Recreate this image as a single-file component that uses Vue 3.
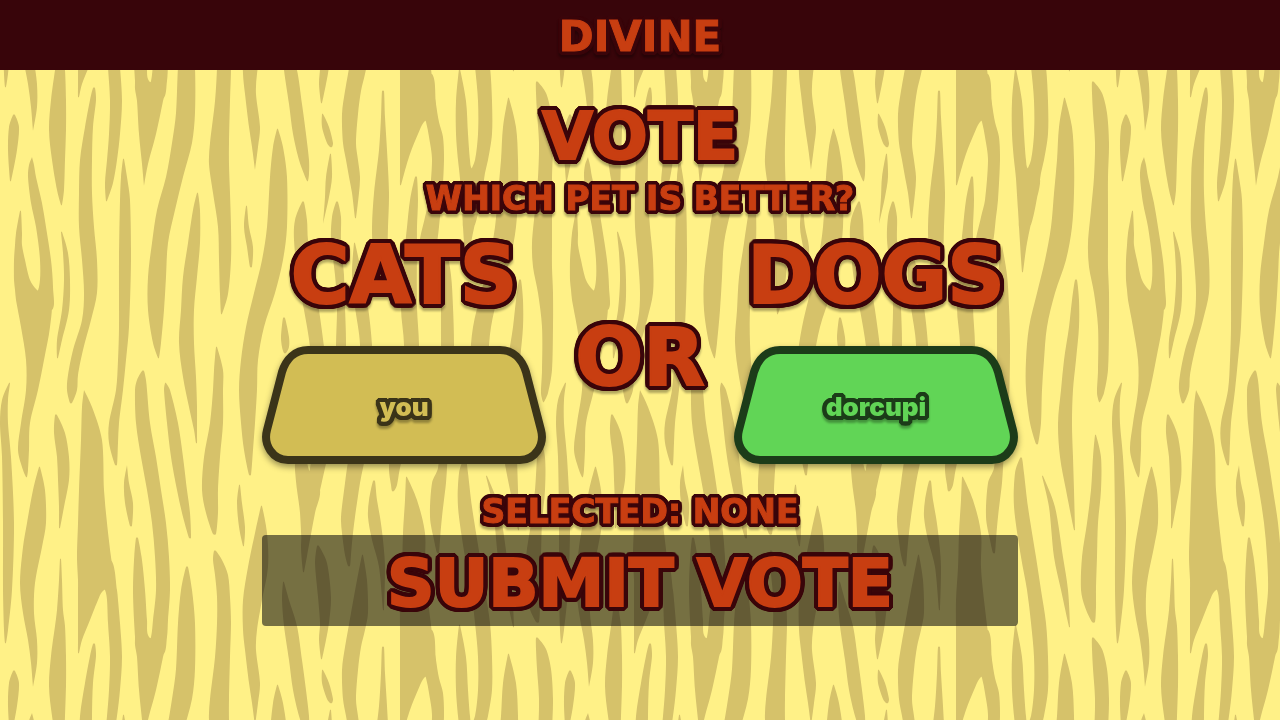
<script setup>
import { ref, computed } from 'vue'

const options = [
  { id: 'cats', label: 'CATS', player: 'you', tone: 'sand' },
  { id: 'dogs', label: 'DOGS', player: 'dorcupi', tone: 'leaf' },
]
const selected = ref(null)
const selectedLabel = computed(() => {
  const match = options.find((o) => o.id === selected.value)
  return match ? match.label : 'NONE'
})

// Wood grain: each streak is a list of rows [y, left, right] inside a repeating tile.
const TILE = 556
const streaks = [
  [[383,9,10],[400,2,8],[423,0,8],[457,2,11],[523,3,14],[590,3,12],[630,4,8],[643,5,6]],
  [[115,13,15],[127,9,19],[150,8,17],[181,10,11]],
  [[467,39,40],[490,33,45],[523,27,46],[547,23,42],[583,20,35],[613,23,34],[640,28,37],[663,31,37],[687,33,33]],
  [[157,32,32],[165,29,34],[177,28,36],[203,31,42],[227,36,46],[260,40,51],[287,39,53],[310,30,52]],
  [[211,20,21],[233,16,22],[245,15,22],[260,14,25],[280,14,30],[290,15,37],[300,16,51],[327,21,50],[360,26,44],[390,26,38],[423,21,30],[450,18,29],[470,23,28],[477,26,27]],
  [[559,60,61],[580,59,62],[610,57,63],[626,55,65],[656,51,66],[686,49,66],[716,52,65],[746,57,64],[761,61,62]],
  [[232,61,62],[253,63,68],[280,64,70],[310,62,69],[340,57,62],[358,57,58]],
  [[88,93,95],[100,90,96],[127,85,93],[160,80,92],[193,79,92],[227,79,94],[260,82,97],[293,84,97],[320,82,91],[350,73,83],[375,68,78],[390,67,77],[403,70,72]],
  [[390,84,84],[407,82,92],[440,81,102],[490,79,104],[523,78,107],[557,77,111],[580,78,114],[592,78,102],[600,78,98],[620,78,90],[640,78,82],[653,78,79]],
  [[560,90,111],[590,105,117],[600,107,118],[623,108,120],[657,110,122],[690,109,120],[716,107,117],[739,105,113],[757,106,107]],
  [[415,55,57],[433,54,65],[457,57,69],[480,58,69],[507,59,64],[528,59,60]],
  [[159,123,124],[177,121,127],[200,120,130],[260,119,131],[327,119,129],[360,118,126],[390,116,123],[423,109,119],[443,109,118],[465,115,117]],
  [[465,127,127],[483,124,129],[503,125,133],[526,130,132]],
  [[538,136,138],[560,134,142],[590,133,145],[620,134,147],[637,135,149],[645,135,165],[657,137,163],[690,139,156],[720,142,148],[742,144,144]],
  [[371,142,144],[380,137,146],[390,135,147],[423,136,150],[457,141,156],[490,147,161],[523,152,166],[557,155,169],[590,156,170],[620,153,168],[637,151,167],[655,145,163]],
  [[383,165,166],[390,164,170],[423,167,178],[457,171,183],[490,177,187],[513,182,190],[538,189,191]],
  [[193,197,198],[210,193,200],[243,188,200],[277,183,197],[310,181,194],[343,179,194],[377,183,196],[407,189,197],[430,194,197],[443,196,197]],
  [[567,186,188],[590,181,192],[623,178,195],[669,176,195],[699,172,192],[733,166,183],[766,157,175],[799,152,168],[833,148,166],[866,148,164],[899,153,161],[914,158,159]],
  [[551,214,216],[560,213,222],[575,215,228],[597,217,230],[623,217,231],[657,215,230],[699,210,229],[720,209,229],[749,213,230],[783,218,231],[816,219,231],[850,220,228],[870,221,222]],
  [[347,216,217],[370,214,223],[390,213,223],[423,210,223],[457,204,220],[490,202,218],[513,206,218],[534,213,216]],
  [[485,239,240],[503,237,242],[527,239,245],[546,243,244]],
  [[206,246,247],[227,244,249],[247,247,253],[267,250,252]],
  [[506,261,262],[533,255,267],[567,248,268],[600,243,262],[630,243,257],[650,245,256],[683,249,260],[703,252,258],[726,255,255]],
  [[129,277,278],[147,273,283],[177,270,287],[227,267,287],[260,262,283],[293,254,275],[327,246,264],[360,241,258],[390,239,257],[423,241,255],[450,244,253],[475,249,251]],
  [[582,283,284],[600,282,289],[626,284,297],[660,289,302],[690,293,306],[716,299,309],[730,304,309],[737,307,308]],
  [[546,317,319],[563,315,327],[597,318,331],[623,320,329],[640,319,326],[659,321,322]],
  [[114,322,323],[127,322,329],[143,327,333],[147,330,332]],
  [[154,330,331],[177,326,332],[197,325,329],[224,323,323]],
  [[202,302,304],[220,295,307],[240,294,308],[280,298,314],[310,304,319],[347,310,324],[400,314,330],[440,314,331],[468,310,325],[513,304,315],[545,301,308],[572,303,304]],
  [[400,296,300],[430,294,304],[460,295,307],[470,295,309],[490,297,320],[513,300,315],[572,303,304]],
  [[202,336,338],[217,332,341],[240,331,341],[275,335,344],[307,337,345],[345,336,346],[400,336,344],[440,340,341]],
  [[243,354,355],[275,352,362],[307,355,368],[345,360,372],[400,358,374],[440,352,369],[468,347,363],[483,345,360],[517,341,355],[533,342,353],[555,345,351],[566,348,350]],
  [[318,283,285],[337,281,289],[347,282,289],[353,284,286]],
  [[555,362,363],[580,357,367],[613,351,368],[630,348,365],[647,345,361],[670,342,358],[699,343,356],[716,346,358],[733,349,360],[749,352,359],[774,355,356]],
  [[91,382,384],[117,381,385],[150,379,387],[193,374,389],[227,372,388],[253,373,387],[290,378,382]],
  [[177,415,417],[200,410,418],[227,407,417],[247,405,417],[307,401,417],[345,404,419],[400,402,418],[440,392,407],[468,389,400],[485,391,397],[491,392,394]],
  [[481,373,375],[500,369,377],[517,368,380],[540,372,383],[567,379,385],[610,383,384]],
  [[477,406,407],[500,405,417],[533,403,425],[567,402,425],[600,400,428],[633,400,432],[667,400,436],[678,400,424],[690,400,418],[710,400,410],[730,400,404],[741,400,401]],
  [[630,410,432],[660,420,436],[678,426,439],[693,429,443],[716,432,444],[756,429,442],[773,425,440],[803,419,436],[831,422,425]],
  [[245,446,446],[275,442,451],[307,441,453],[345,441,454],[400,441,453],[440,440,449],[468,438,447],[483,432,446],[517,430,442],[540,434,440],[553,437,439]],
  [[476,486,487],[507,493,499],[557,498,507],[590,505,512],[627,513,514]],
  [[458,464,466],[473,459,468],[507,458,472],[557,465,480],[590,471,485],[623,475,490],[657,478,492],[690,478,492],[716,475,488],[729,470,485],[749,466,482],[783,463,474]],
  [[625,459,460],[657,456,466],[690,456,468],[716,458,470],[725,459,472],[735,460,484],[766,462,478],[799,464,471],[828,466,467]],
  [[98,508,509],[127,503,516],[160,501,518],[193,498,518],[227,495,516],[260,489,510],[293,481,499],[327,473,491],[360,470,488],[390,470,486],[423,474,485],[444,480,482]],
  [[280,519,521],[300,516,523],[327,513,523],[360,508,520],[390,505,517],[423,502,516],[457,504,517],[490,510,518],[530,518,519]],
  [[82,536,538],[93,536,546],[113,537,551],[143,539,553],[177,538,552],[210,535,552],[243,532,552],[267,533,552],[293,538,553],[327,542,553],[370,542,552],[393,541,548],[402,543,544]],
  [[435,539,540],[457,537,545],[490,535,545],[523,531,542],[557,526,541],[590,525,540],[607,529,540],[622,536,539]],
]

// Closed Catmull-Rom curve through the outline of a streak.
function outline(rows) {
  const pts = [
    ...rows.map(([y, l]) => [l, y]),
    ...rows.slice().reverse().map(([y, , r]) => [r, y]),
  ]
  const n = pts.length
  const at = (i) => pts[(i + n) % n]
  let d = `M${pts[0][0]} ${pts[0][1]}`
  for (let i = 0; i < n; i++) {
    const [a, b, c, e] = [at(i - 1), at(i), at(i + 1), at(i + 2)]
    // Short end caps keep gentle handles so the tips stay round.
    const len = Math.hypot(c[0] - b[0], c[1] - b[1])
    const handle = (p, q) => {
      const vx = q[0] - p[0]
      const vy = q[1] - p[1]
      const m = Math.hypot(vx, vy) || 1
      const k = Math.min(m / 6, len / 3) / m
      return [vx * k, vy * k]
    }
    const h1 = handle(a, c)
    const h2 = handle(b, e)
    d += `C${b[0] + h1[0]} ${b[1] + h1[1]} ${c[0] - h2[0]} ${c[1] - h2[1]} ${c[0]} ${c[1]}`
  }
  return d + 'Z'
}
const grain = streaks.map(outline).join('')
const shifts = [0, -TILE]
</script>

<template>
  <div class="page">
    <svg class="wood" aria-hidden="true">
      <defs>
        <pattern id="wood-grain" :width="TILE" :height="TILE" patternUnits="userSpaceOnUse">
          <path
            v-for="dy in shifts"
            :key="dy"
            class="streak"
            :d="grain"
            :transform="`translate(0 ${dy})`"
          />
        </pattern>
      </defs>
      <rect width="100%" height="100%" fill="url(#wood-grain)" />
    </svg>

    <header class="bar">
      <span class="ink brand">DIVINE</span>
    </header>

    <main class="vote">
      <h1 class="ink title">VOTE</h1>
      <p class="ink line question">WHICH PET IS BETTER?</p>

      <div class="choices">
        <template v-for="(option, i) in options" :key="option.id">
          <span v-if="i" class="ink big or">OR</span>
          <section class="choice">
            <h2 :id="option.id" class="ink big">{{ option.label }}</h2>
            <button
              type="button"
              class="card"
              :class="option.tone"
              :aria-describedby="option.id"
              :aria-pressed="selected === option.id"
              @click="selected = option.id"
            >
              <svg class="plate" viewBox="0 0 284 118" preserveAspectRatio="none" aria-hidden="true">
                <path d="M46 4H238C251 4 260 13 264 26L279 84C283 99 273 114 258 114H26C11 114 1 99 5 84L20 26C24 13 33 4 46 4Z" />
              </svg>
              <span class="ink player">{{ option.player }}</span>
            </button>
          </section>
        </template>
      </div>

      <p class="ink line status">SELECTED: {{ selectedLabel }}</p>
      <button type="button" class="submit"><span class="ink title">SUBMIT VOTE</span></button>
    </main>
  </div>
</template>

<style>
body {
  margin: 0;
  background: #fff187;
}
</style>

<style scoped>
.page {
  position: relative;
  min-height: 100vh;
  background: #fff187;
  font-family: "DejaVu Sans", sans-serif;
  font-weight: 700;
}

.wood {
  position: absolute;
  inset: 0;
  width: 100%;
  height: 100%;
}

.streak {
  fill: #d6c26a;
}

/* Rounded outline: copies of the glyphs set on a ring around them. */
.ink {
  --o: #3a050a;
  margin: 0;
  color: #c83e11;
  font-weight: 700;
  line-height: 1;
  white-space: nowrap;
  text-shadow:
    4px 0 var(--o), 4px 1px var(--o), 4px 2px var(--o), 3px 3px var(--o),
    2px 4px var(--o), 1px 4px var(--o), 0 4px var(--o), -1px 4px var(--o),
    -2px 4px var(--o), -3px 3px var(--o), -4px 2px var(--o), -4px 1px var(--o),
    -4px 0 var(--o), -4px -1px var(--o), -4px -2px var(--o), -3px -3px var(--o),
    -2px -4px var(--o), -1px -4px var(--o), 0 -4px var(--o), 1px -4px var(--o),
    2px -4px var(--o), 3px -3px var(--o), 4px -2px var(--o), 4px -1px var(--o);
  filter: drop-shadow(0 3px 1px rgba(0, 0, 0, 0.3));
}

.bar {
  position: relative;
  display: flex;
  align-items: center;
  justify-content: center;
  height: 70px;
  padding-top: 4px;
  box-sizing: border-box;
  background: #38050a;
}

.brand {
  font-size: 42px;
  -webkit-text-stroke: 1px currentColor;
}

.vote {
  position: relative;
  display: flex;
  flex-direction: column;
  align-items: center;
  box-sizing: border-box;
  max-width: 756px;
  margin: 0 auto;
  padding-top: 34px;
}

.title,
.big {
  -webkit-text-stroke: 2px currentColor;
  text-shadow:
    5px 0 var(--o), 5px 1px var(--o), 5px 2px var(--o), 4px 3px var(--o),
    3px 4px var(--o), 2px 5px var(--o), 1px 5px var(--o), 0 5px var(--o),
    -1px 5px var(--o), -2px 5px var(--o), -3px 4px var(--o), -4px 3px var(--o),
    -5px 2px var(--o), -5px 1px var(--o), -5px 0 var(--o), -5px -1px var(--o),
    -5px -2px var(--o), -4px -3px var(--o), -3px -4px var(--o), -2px -5px var(--o),
    -1px -5px var(--o), 0 -5px var(--o), 1px -5px var(--o), 2px -5px var(--o),
    3px -4px var(--o), 4px -3px var(--o), 5px -2px var(--o), 5px -1px var(--o),
    3px 0 var(--o), 0 3px var(--o), -3px 0 var(--o), 0 -3px var(--o);
}

.title {
  font-size: 66px;
}

.big {
  font-size: 80px;
}

.line {
  font-size: 33px;
  -webkit-text-stroke: 1px currentColor;
}

.question {
  margin-top: 12px;
}

.status {
  margin-top: 31px;
}

.choices {
  display: grid;
  grid-template-columns: 284px 1fr 284px;
  align-items: center;
  width: 100%;
  margin-top: 21px;
}

.choice {
  display: flex;
  flex-direction: column;
  align-items: center;
}

.or {
  justify-self: center;
  padding-top: 16px;
}

.card {
  position: relative;
  width: 100%;
  height: 118px;
  margin-top: 30px;
  padding: 4px 0 0;
  border: 0;
  background: none;
  cursor: pointer;
}

.plate {
  position: absolute;
  inset: 0;
  width: 100%;
  height: 100%;
  overflow: visible;
  filter: drop-shadow(0 3px 3px rgba(0, 0, 0, 0.4));
  stroke-width: 8px;
}

.player {
  position: relative;
  display: inline-block;
  font-family: Inter, sans-serif;
  font-size: 26px;
  font-weight: 900;
}

.sand .plate {
  fill: #d2bd54;
  stroke: #3b3419;
}

.sand .player {
  --o: #3b3419;
  color: #d2bd54;
}

.leaf .plate {
  fill: #61d556;
  stroke: #1c3c19;
}

.leaf .player {
  --o: #1c3c19;
  color: #61d556;
}

.submit {
  width: 100%;
  height: 91px;
  margin-top: 7px;
  padding: 6px 0 0;
  border: 0;
  border-radius: 4px;
  background: rgba(10, 10, 12, 0.56);
  font-family: inherit;
  cursor: pointer;
}

.submit .ink {
  filter: none;
}
</style>
